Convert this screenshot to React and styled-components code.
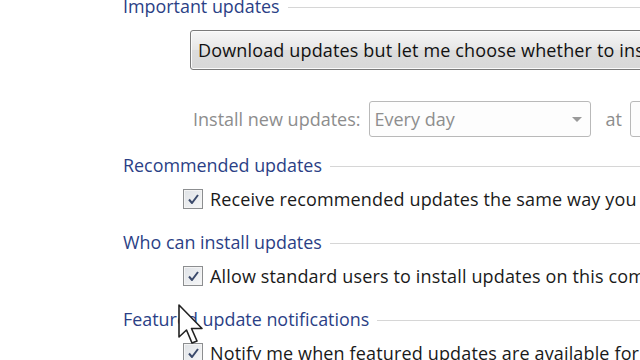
import React from 'react';
import styled, { createGlobalStyle } from 'styled-components';

const Global = createGlobalStyle`
   html, body {
      margin: 0;
      padding: 0;
      background: #ffffff;
      overflow: hidden;
   }
   body {
      font-family: "Open Sans", "Noto Sans", sans-serif;
   }
`;

const sections = [
   { title: 'Recommended updates', label: 'Receive recommended updates the same way you receive important updates' },
   { title: 'Who can install updates', label: 'Allow standard users to install updates on this computer' },
   { title: 'Featured update notifications', label: 'Notify me when featured updates are available for your computer' },
];

const Check = () => (
   <CheckBox>
      <svg width="13" height="13" viewBox="0 0 13 13">
         <path d="M2 6.5 L5 10 L11 2" fill="none" stroke="#3b4a6b" strokeWidth="2" strokeLinejoin="round" />
      </svg>
   </CheckBox>
);

const Cursor = () => (
   <CursorWrap>
      <svg width="30" height="44" viewBox="0 0 30 44">
         <path
            d="M2 2 L2 34 L9.5 27 L15 40 L20 38 L14.5 25.5 L25 25.5 Z"
            fill="#ffffff"
            stroke="#222"
            strokeWidth="1.6"
            strokeLinejoin="round"
         />
      </svg>
   </CursorWrap>
);

const App = () => {
   return (
      <Page>
         <Global />
         <Section $first>
            <Heading>
               <span>Important updates</span>
               <Rule />
            </Heading>
            <DropButton>Download updates but let me choose whether to install them</DropButton>
            <InstallRow>
               <span>Install new updates:</span>
               <Combo>
                  <span>Every day</span>
                  <Arrow />
               </Combo>
               <span>at</span>
               <Combo $small />
            </InstallRow>
         </Section>
         {sections.map(s => (
            <Section key={s.title}>
               <Heading>
                  <span>{s.title}</span>
                  <Rule />
               </Heading>
               <CheckRow>
                  <Check />
                  <span>{s.label}</span>
               </CheckRow>
            </Section>
         ))}
         <Cursor />
      </Page>
   );
};

export default App;

const Page = styled.div`
   position: relative;
   display: flex;
   flex-direction: column;
   width: 640px;
   height: 360px;
   overflow: hidden;
   padding-left: 123px;
   box-sizing: border-box;
   font-size: 18px;
   white-space: nowrap;
`;

const Section = styled.div`
   display: flex;
   flex-direction: column;
   flex: none;
   margin-top: ${props => (props.$first ? '-11px' : '9px')};
   margin-bottom: ${props => (props.$first ? '2px' : '0')};
`;

const Heading = styled.div`
   display: flex;
   align-items: center;
   gap: 8px;
   height: 34px;
   color: #2b3f86;
   font-size: 17.9px;
   span {
      flex: none;
   }
`;

const Rule = styled.div`
   flex: 1;
   height: 1px;
   background: #d6d6d6;
   margin-top: 2px;
`;

const DropButton = styled.div`
   margin: 7px 0 0 67px;
   height: 38px;
   width: 600px;
   border: 1px solid #7a7a7a;
   border-radius: 3px;
   background: linear-gradient(#f6f6f6, #e6e6e6 50%, #dcdcdc 51%, #d8d8d8);
   box-shadow: inset 0 0 0 1px #fbfbfb;
   display: flex;
   align-items: center;
   padding-left: 7px;
   color: #111;
   letter-spacing: 0.15px;
   overflow: hidden;
`;

const InstallRow = styled.div`
   display: flex;
   align-items: center;
   gap: 8px;
   margin: 31px 0 0 70px;
   height: 36px;
   color: #8d8d8d;
`;

const Combo = styled.div`
   width: ${props => (props.$small ? '40px' : '222px')};
   height: 36px;
   margin-right: ${props => (props.$small ? '0' : '7px')};
   flex: none;
   border: 1px solid #b9b9b9;
   border-radius: 3px;
   box-sizing: border-box;
   display: flex;
   align-items: center;
   justify-content: space-between;
   padding: 0 8px 0 5px;
   color: #8e8e8e;
   background: #fdfdfd;
`;

const Arrow = styled.div`
   width: 0;
   height: 0;
   border-left: 5px solid transparent;
   border-right: 5px solid transparent;
   border-top: 5px solid #9a9a9a;
`;

const CheckRow = styled.div`
   display: flex;
   align-items: center;
   gap: 7px;
   margin-left: 60px;
   height: 34px;
   color: #1a1a1a;
   letter-spacing: 0.15px;
`;

const CheckBox = styled.div`
   width: 20px;
   height: 20px;
   box-sizing: border-box;
   border: 1px solid #8c8e90;
   background: linear-gradient(135deg, #dfe2e6, #f6f7f8);
   box-shadow: inset 0 0 0 1px #f4f4f4;
   display: flex;
   align-items: center;
   justify-content: center;
   flex: none;
`;

const CursorWrap = styled.div`
   position: absolute;
   left: 177px;
   top: 303px;
   line-height: 0;
`;
